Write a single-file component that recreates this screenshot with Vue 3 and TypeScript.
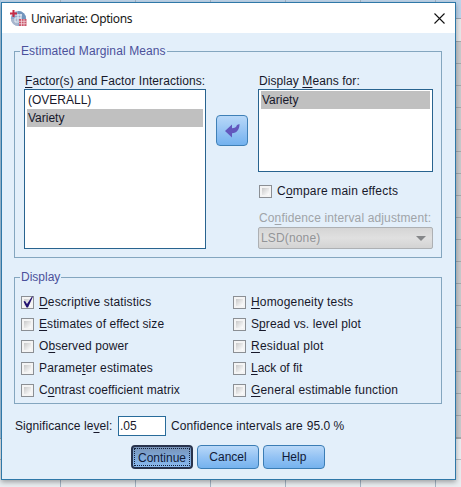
<script setup lang="ts">
import { ref } from 'vue'

interface Option {
  before: string
  key: string
  after: string
  checked: boolean
  fit: string
}

const opt = (before: string, key: string, after: string, fit: string, checked = false): Option => ({ before, key, after, checked, fit })

const columns = ref<Option[][]>([
  [
    opt('', 'D', 'escriptive statistics', 'wide', true),
    opt('', 'E', 'stimates of effect size', 'normal'),
    opt('O', 'b', 'served power', 'normal'),
    opt('Parame', 't', 'er estimates', 'wide'),
    opt('C', 'o', 'ntrast coefficient matrix', 'normal'),
  ],
  [
    opt('', 'H', 'omogeneity tests', 'wide'),
    opt('S', 'p', 'read vs. level plot', 'normal'),
    opt('', 'R', 'esidual plot', 'wider'),
    opt('', 'L', 'ack of fit', 'tight'),
    opt('', 'G', 'eneral estimable function', 'wide'),
  ],
])
const level = ref('.05')
</script>

<template>
  <div class="desktop">
    <section class="dialog">
      <header class="titlebar">
        <svg class="logo" viewBox="0 0 17 17">
          <circle cx="8.5" cy="8.5" r="7.6" fill="#8fa9cc" />
          <path d="M8 1a8 8 0 0 1 8 8h-4V4H8z" fill="#7295bd" />
          <path d="M1 9h7v7a8 8 0 0 1-7-7z" fill="#a8b7ce" />
          <path d="M5 5h7M5 8h6M8 4v7M11 4v5M5 8v4h4" stroke="#e8eef6" fill="none" />
          <path d="M3.5 0v7M0 3.5h7" stroke="#c72b45" stroke-width="2" />
          <path d="M9 9h7.5v7H9z" fill="#c9566b" />
          <path d="M9 11.3h7.5M9 13.7h7.5M11.5 9v7M14 9v7" stroke="#f7dfe4" stroke-width=".7" />
        </svg>
        <span class="title">Univariate: Options</span>
        <svg class="close" viewBox="0 0 11 11"><path d="M.5.5l10 10M10.5.5l-10 10" stroke="#111" stroke-width="1.1" /></svg>
      </header>

      <fieldset class="group means">
        <legend class="l-means">Estimated Marginal Means</legend>
        <div class="col-left">
          <div class="label t-factors"><u>F</u>actor(s) and Factor Interactions:</div>
          <div class="list tall">
            <div class="item">(OVERALL)</div>
            <div class="item selected">Variety</div>
          </div>
        </div>
        <button class="move" aria-label="Move">
          <svg viewBox="0 0 15 14"><path d="M0 7L7 .5v3.7c2.600 0 4.300-1 5-3.200L14.500 0c0 5.500-2.500 9-7.500 9.300V13.500z" fill="#6257bd" /></svg>
        </button>
        <div class="col-right">
          <div class="label t-means">Display <u>M</u>eans for:</div>
          <div class="list short"><div class="item selected">Variety</div></div>
          <label class="check compare"><i class="box"></i><span class="t-compare">C<u>o</u>mpare main effects</span></label>
          <div class="label off">Co<u>n</u>fidence interval adjustment:</div>
          <div class="select"><span>LSD(none)</span><svg viewBox="0 0 10 5"><path d="M0 0h10L5 5z" fill="#858789" /></svg></div>
        </div>
      </fieldset>

      <fieldset class="group display">
        <legend>Display</legend>
        <div v-for="(column, c) in columns" :key="c" class="options">
          <label v-for="o in column" :key="o.after" class="check" @click="o.checked = !o.checked">
            <i class="box" :class="{ on: o.checked }">
              <svg v-if="o.checked" viewBox="0 0 13 13"><path d="M2.500 5.500l1.500-.5 2 3L11 .5h1L7 11.500H5.500z" fill="#21106f" /></svg>
            </i>
            <span :class="o.fit">{{ o.before }}<u>{{ o.key }}</u>{{ o.after }}</span>
          </label>
        </div>
      </fieldset>

      <div class="level">
        <span class="t-sig">Significance le<u>v</u>el:</span>
        <input v-model="level" />
        <span class="t-ci">Confidence intervals are</span>
        <span class="t-pct">95.0 %</span>
      </div>
      <footer class="actions">
        <button class="btn primary"><span>Continue</span></button>
        <button class="btn">Cancel</button>
        <button class="btn">Help</button>
      </footer>
    </section>
  </div>
</template>

<style>
body { margin: 0; overflow: hidden; }
</style>

<style scoped>
* { box-sizing: border-box; }
.desktop {
  width: 461px;
  height: 487px;
  padding: 2px 5px 6px 1px;
  overflow: hidden;
  background:
    linear-gradient(#a9cbe6, #a9cbe6) 0 0 / 1px 438px no-repeat,
    repeating-linear-gradient(90deg, transparent 0 60px, #a3b4c4 60px 61px, transparent 61px 75px) 0 0 / 75px 100% repeat-x,
    linear-gradient(#bed4ea 0 18px, #9aa5b1 18px 19px, #e5e7e9 19px 41px, transparent 41px 438px, #a5a8ab 438px 439px, #e9edf0 439px 459px, #b5bbc1 459px 460px, #e9edf0 460px),
    repeating-linear-gradient(#c8cacc 0 21px, #a5a8ab 21px 22px) 0 -2px;
  font-family: "Liberation Sans", Arial, sans-serif;
  font-size: 12px;
  color: #17182a;
}
.dialog {
  width: 455px;
  height: 478px;
  border: 1px solid #2f78a8;
  background: #e3effa;
  box-shadow: 0 2px 5px #0005;
}
.titlebar {
  display: flex;
  align-items: center;
  height: 30px;
  padding: 0 10px 0 8px;
  background: #fff;
}
.logo { width: 17px; height: 17px; }
.title {
  flex: 1;
  margin-left: 4px;
  font: 12px "Noto Sans", "Open Sans", sans-serif;
  letter-spacing: -.42px;
  color: #181818;
}
.close { width: 11px; height: 11px; }
u { text-decoration-thickness: 1px; text-underline-offset: 2px; text-decoration-skip-ink: none; }
span, .label, .item, legend { white-space: pre; }
.group {
  display: flex;
  min-width: 0;
  margin: 0 0 0 12px;
  padding: 0;
  width: 428px;
  border: 1px solid #84a6bf;
}
legend { height: 13px; line-height: 13px; padding: 0 1px; margin-left: 5px; color: #4b519b; }
.l-means { letter-spacing: .11px; }
.t-factors { letter-spacing: .08px; }
.t-means { letter-spacing: .08px; }
.t-compare { letter-spacing: .2px; }
.normal { letter-spacing: .085px; }
.wide { letter-spacing: .17px; }
.wider { letter-spacing: .25px; }
.tight { letter-spacing: 0; }
.means { margin-top: 12px; height: 213px; }
.col-left { width: 182px; margin-left: 9px; padding-top: 15px; }
.label { height: 16px; line-height: 16px; padding-left: 1px; }
.list { border: 1px solid #28638f; background: #fff; padding: 1px 2px; }
.tall { height: 160px; }
.short { height: 83px; }
.item { height: 18px; line-height: 18px; padding-left: 1px; }
.selected { background: #c0c0c0; }
.move {
  display: flex;
  align-items: center;
  justify-content: center;
  width: 32px;
  height: 31px;
  margin: 57px 10px 0 10px;
  padding: 0;
  border: 1px solid #3f80b7;
  border-radius: 4px;
  background: linear-gradient(#b8d8f8, #93c2f3 55%, #73b2ef);
}
.move svg { width: 15px; height: 14px; }
.col-right { width: 175px; padding-top: 15px; }
.check { display: flex; align-items: center; height: 22px; }
.box {
  width: 13px;
  height: 13px;
  flex: none;
  margin-right: 5px;
  border: 1px solid #8b8f94;
  background: linear-gradient(135deg, #c9c9c9, #fff) 2px 2px / 7px 7px no-repeat, #f4f4f4;
}
.box svg { display: block; width: 13px; height: 13px; margin: -1px; }
.compare { margin: 8px 0 0 1px; height: 22px; }
.off { margin-top: 8px; margin-bottom: 1px; color: #a0a4a8; letter-spacing: .13px; }
.select {
  display: flex;
  align-items: center;
  justify-content: space-between;
  height: 22px;
  padding: 0 6px 0 2px;
  border: 1px solid #adb0b3;
  border-radius: 2px;
  background: linear-gradient(#d5d5d5, #e0e0e0 50%, #d3d3d3);
  color: #929497;
  letter-spacing: .15px;
}
.select svg { width: 10px; height: 5px; }
.display { margin-top: 13px; height: 133px; }
.options { width: 212px; padding: 7px 0 0 6px; }
.level { display: flex; align-items: center; height: 20px; margin: 12px 0 0 13px; }
.level input {
  width: 48px;
  height: 20px;
  margin: 0 5px;
  padding: 0 1px;
  border: 1px solid #286b9a;
  background: #fff;
  font: inherit;
  color: inherit;
}
.t-sig { width: 98px; letter-spacing: .07px; }
.t-ci { letter-spacing: .1px; }
.t-pct { margin-left: 4px; }
.actions { display: flex; gap: 4px; margin: 9px 0 0 129px; }
.btn {
  width: 62px;
  height: 24px;
  padding: 0;
  border: 1px solid #3b7db5;
  border-radius: 4px;
  background: linear-gradient(#b9d8f8, #94c3f4 50%, #75b2ee);
  font: inherit;
  font-size: 12px;
  color: #111a38;
}
.primary {
  border: 2px solid #28334d;
  background: linear-gradient(#7893b7, #7fa8d8 50%, #8ab9ef);
  padding: 1px;
}
.primary span { display: block; height: 18px; line-height: 18px; border: 1px dotted #14233d; }
</style>
